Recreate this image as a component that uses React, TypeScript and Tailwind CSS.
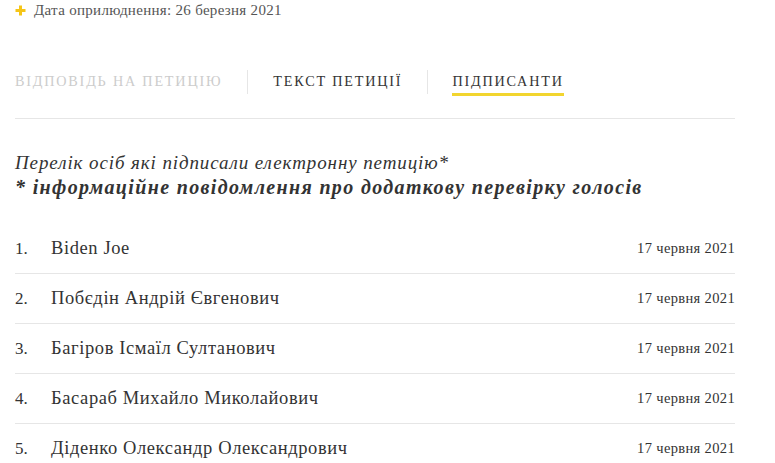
const signers = [
  "Biden Joe",
  "Побєдін Андрій Євгенович",
  "Багіров Ісмаїл Султанович",
  "Басараб Михайло Миколайович",
  "Діденко Олександр Олександрович",
];

function PlusIcon() {
  return (
    <svg width="11" height="11" viewBox="0 0 11 11" className="shrink-0">
      <path d="M5.5 0.5v10M0.5 5.5h10" stroke="#f5c518" strokeWidth="3" />
    </svg>
  );
}

export default function App() {
  return (
    <div className="min-h-screen bg-white text-[#333] font-['Liberation_Serif',serif] overflow-hidden">
      <div className="w-[720px] ml-[15px]">
        <div className="flex items-center gap-[8px] pl-[0px] h-[20px] text-[15px] tracking-[0.3px] text-[#555]">
          <PlusIcon />
          <span>Дата оприлюднення: 26 березня 2021</span>
        </div>

        <div className="mt-[49px] flex items-center h-[26px] text-[14.2px] uppercase tracking-[1.8px]">
          <span className="text-[#ccc] pr-[25px]">Відповідь на петицію</span>
          <span className="w-px h-[24px] bg-[#e6e6e6]" />
          <span className="text-[#333] px-[25px]">Текст петиції</span>
          <span className="w-px h-[24px] bg-[#e6e6e6]" />
          <span className="text-[#333] ml-[24px] border-b-[3px] border-[#f2d52f] pt-[3px]">Підписанти</span>
        </div>

        <div className="mt-[23px] border-t border-[#e6e6e6]" />

        <div className="mt-[31px] italic leading-[25px]">
          <div className="text-[19px] tracking-[0.9px]">Перелік осіб які підписали електронну петицію*</div>
          <div className="text-[20px] tracking-[1.35px] font-bold">* інформаційне повідомлення про додаткову перевірку голосів</div>
        </div>

        <div className="mt-[24px]">
          {signers.map((name, i) => (
            <div
              key={i}
              className="flex items-center h-[50px] border-b border-[#e6e6e6]"
            >
              <span className="w-[36px] text-[17px]">{i + 1}.</span>
              <span className="flex-1 text-[18.5px] tracking-[0.6px]">{name}</span>
              <span className="text-[14.5px] tracking-[0.35px]">17 червня 2021</span>
            </div>
          ))}
        </div>
      </div>
    </div>
  );
}
